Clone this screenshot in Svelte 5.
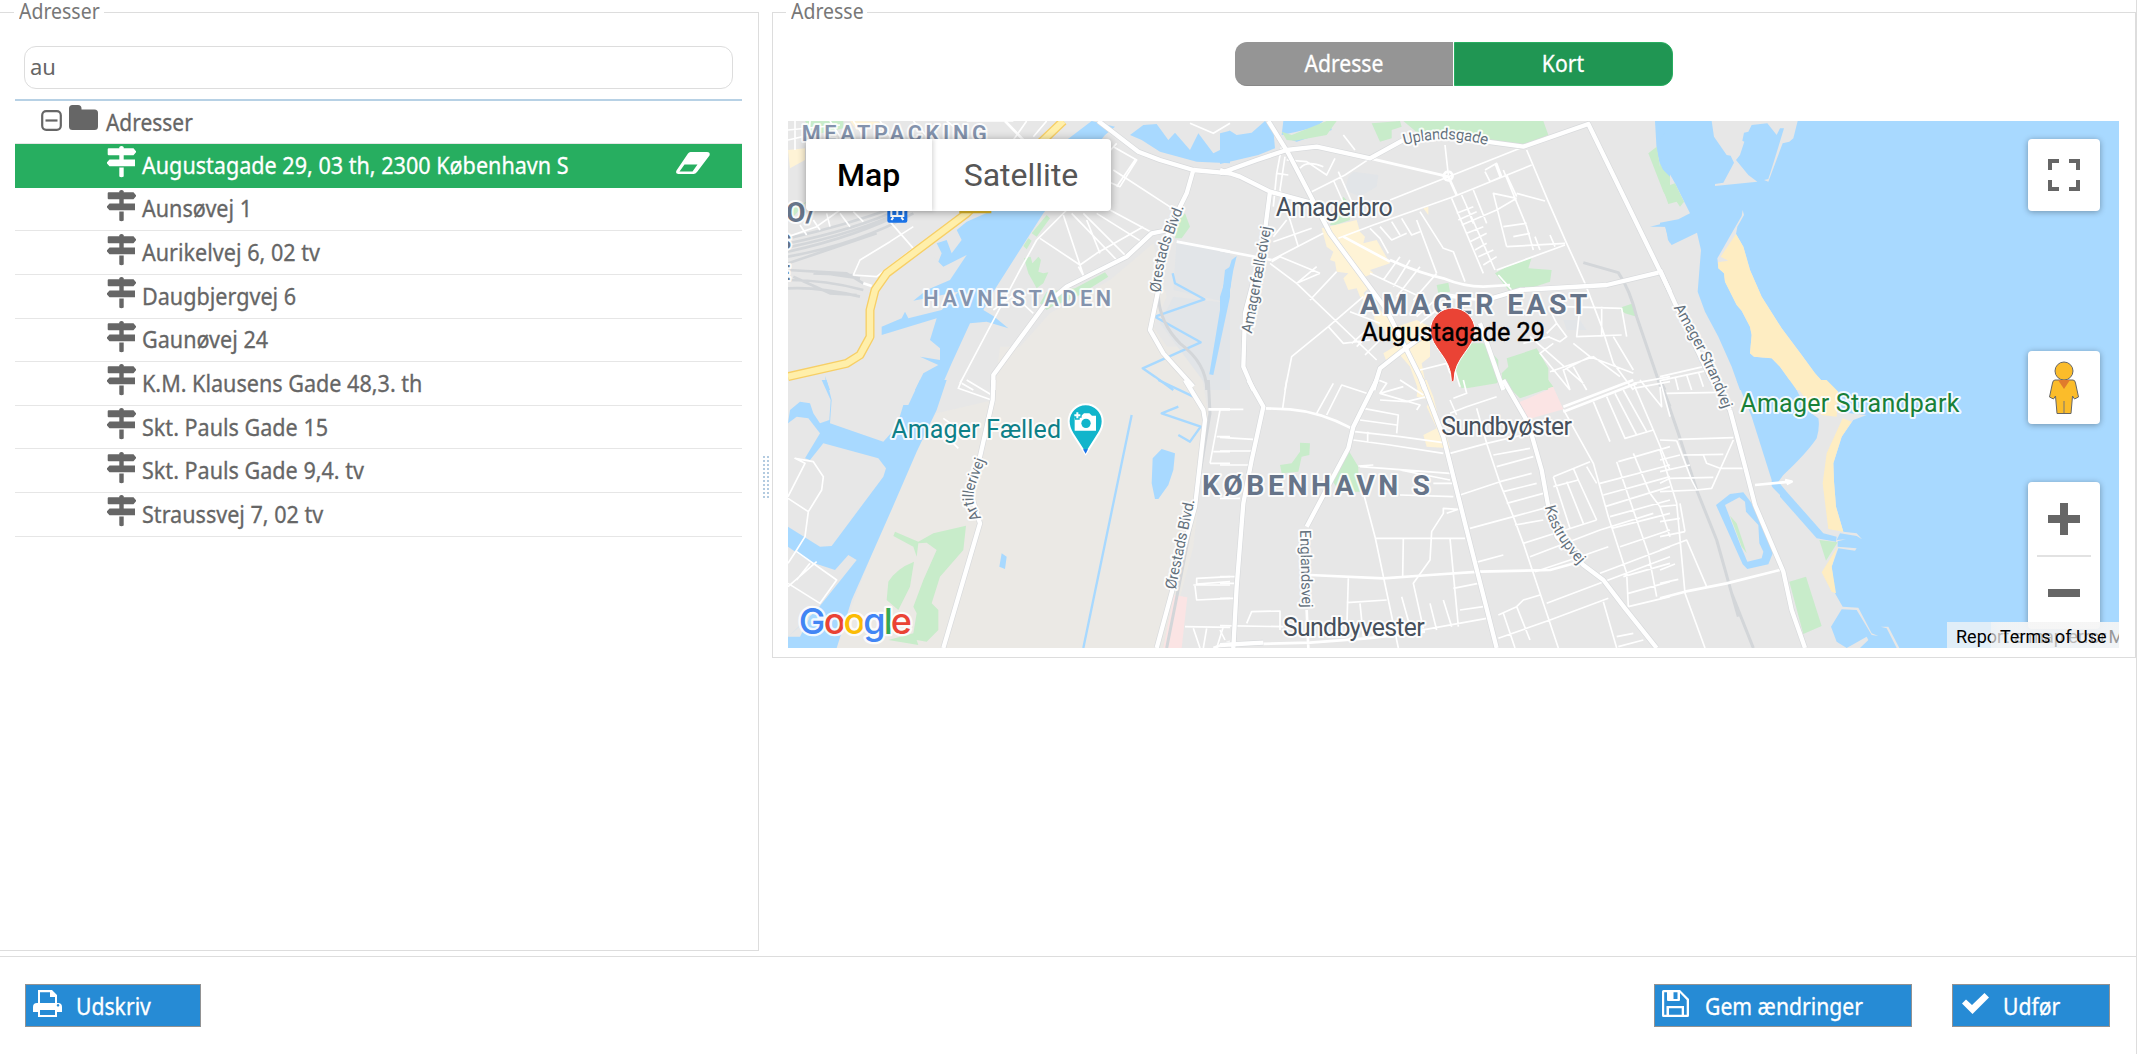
<script>
  const addresses = [
    'Augustagade 29, 03 th, 2300 København S',
    'Aunsøvej 1',
    'Aurikelvej 6, 02 tv',
    'Daugbjergvej 6',
    'Gaunøvej 24',
    'K.M. Klausens Gade 48,3. th',
    'Skt. Pauls Gade 15',
    'Skt. Pauls Gade 9,4. tv',
    'Straussvej 7, 02 tv'
  ];
  let query = $state('au');
  let selected = $state(0);

  // Map geometry, split in six tiles; each path is relative to its tile's origin.
  const tiles = [
    {
      x: 0, y: 0,
      beige: 'M640 840V800L810 610L990 510L1120 400L1160 560L1120 650L1230 810L1270 840Z',
      pale: 'M1190 390L1350 420V580L1180 540Z M1180 560L1350 580V840H1290L1140 640Z',
      water:
        'M935 33L1005 50L975 75L790 310L640 545L610 600L640 618L685 655L620 635L570 640L515 760L480 840H405L430 790L475 765L420 740L480 750V715L450 690L470 625L305 675V650L365 625L375 605L385 625L485 600L535 545L400 572L440 540L510 510L560 435L490 470L450 430L475 455L485 430L470 400L500 390L515 430L545 390L530 360L560 335L640 300L860 90Z M1050 75L1090 45L1130 42L1165 90L1185 68L1230 120L1255 70L1300 130L1320 120L1350 60V160L1250 155L1140 125L1085 90Z M1335 480L1350 470V560L1300 795L1288 793L1325 570Z M135 798L150 840H140Z',
      waterline: 'M1178 490L1185 520L1273 568L1125 620L1262 697L1088 775L1125 800L1180 840',
      park: 'M800 315L810 325L770 380L755 370Z M745 385L755 392L740 418L730 408Z M732 445L752 440L757 460L775 440L783 450L775 485L790 490L805 487L790 520L770 535L745 490Z M885 535L975 487L985 500L890 560L815 590L800 600L780 580L800 545Z M1195 330L1215 310L1230 350L1205 385H1185Z M75 33H190V55L100 75Z M25 300L80 275L40 320Z',
      yellow: 'M24 120L75 115V150L30 175Z M210 33L305 35L230 60Z',
      rail: 'M1135 560Q1140 640 1200 700Q1280 760 1280 840',
      yards: 'M24 400Q220 360 380 290 M24 412Q230 370 385 295 M24 425Q230 380 385 300 M24 440Q240 400 400 310 M24 385Q200 345 350 290 M24 460L290 370 M24 480L200 490L250 520 M24 510Q140 510 250 540 M24 535Q120 530 240 560 M100 485L240 505 M100 490L220 495 M40 500L150 550L230 555',
      minor:
        'M45 33V120 M90 33L85 100 M24 60L180 45 M24 90L110 70 M150 33L200 110 M220 33L260 90 M300 33L340 95 M400 33L450 90 M500 33L560 80 M560 33L700 33 M700 90L740 33 M800 33L760 80 M24 380L110 350L180 300 M60 345L80 375 M100 330L120 360 M140 310L150 350 M180 310L210 350 M220 305L250 335 M330 335L400 415L290 500L220 495L240 450L330 395L400 350 M440 405L520 350 M920 330L960 430 M860 300L770 390L720 480L540 820 M780 385L900 465L950 430L1020 390L1090 350 M850 315L910 495 M875 310L1010 450 M910 310L1040 440 M950 310L1085 395 M990 300L1120 370 M1000 180L1200 310 M985 215L1020 230L1070 150L1000 110 M1065 150L1010 230 M1230 40L1300 70L1350 40 M960 155L1010 100 M895 470L915 505 M760 610L700 555L640 600 M545 820L580 840',
      mid: 'M250 520L275 528 M675 33L740 100 M1190 395L1350 425',
      major: 'M955 33L1075 125L1140 150L1240 180L1350 190 M1240 180L1220 250L1200 290L1165 360L1115 370L1040 440L860 530L790 590L640 795V840 M1165 365L1135 540L1110 660L1150 730L1240 830',
      highway: 'M850 33L560 310L320 490L285 540L270 600L270 680L240 735L200 760L24 800'
    },
    {
      x: 0, y: 810,
      beige: 'M470 100L640 60L660 -100H1250L1285 100L1240 500L1160 804H170L230 640L330 380L420 170Z',
      pale: '',
      water:
        'M420 0H500L470 90L410 215L330 400L215 660L170 804H24V770L110 690L190 590L230 540L205 525L165 570L90 545L24 500V440L120 500L155 498L310 290L318 265L295 235L130 190L90 240L75 235L120 160L85 115L50 110L24 130L30 90L60 65L90 70L100 100L120 130L148 120L152 60L125 0H140L155 60L150 130L310 185L350 140L370 75L385 75Z M1118 235L1145 207L1185 220L1180 270L1165 315L1135 357H1125L1115 310Z M665 520L680 530L675 567L658 560Z M90 710L24 770H60Z',
      waterline: 'M1055 105L910 804 M1195 80L1145 100L1262 140L1230 185L1195 165 M1135 0L1240 50',
      park: 'M345 455L415 485L460 460L558 437L550 510L480 590L455 670L475 690V750L440 785L410 780L415 795L325 780L400 760L410 700L400 680L430 600L470 510L440 488L415 490L410 530L400 500L340 468Z M402 545L390 620L355 690L320 660L325 605Q350 565 402 545Z',
      yellow: '', pink: 'M1182 645L1222 652L1205 804H1150Z',
      rail: 'M1285 0L1290 100L1240 400L1160 804',
      yards: '',
      minor:
        'M545 0L535 25L635 60 M560 0L635 45 M490 115L540 150L510 180L535 205 M24 350L75 250L45 235L100 245L130 290L125 330L85 395L24 355 M85 395L75 470L50 510L24 550 M50 515L170 600L120 670L24 610 M90 550L50 600 M24 620L110 545 M1320 90L1290 250 M1310 170H1350 M1300 215H1350 M1290 250H1350 M1350 590L1250 595V612L1350 605 M1240 615H1350 M1245 618L1250 660L1350 655 M1215 740L1350 742 M1240 745L1260 804 M1280 745L1270 804 M1330 740L1310 804',
      mid: 'M1285 88H1350 M1350 785L1300 804',
      major: 'M640 0L638 60L600 230L570 330L600 430L490 804 M1215 0L1270 90L1275 120L1245 380L1130 804',
      highway: ''
    },
    {
      x: 1320, y: 0,
      beige: '', pale: 'M385 200L400 185L475 195L470 230L420 260L375 240Z M0 430L50 440L20 560L0 640Z M1030 630H1080L1100 660H1040Z',
      water: 'M0 70L30 62L50 75L95 68L135 33L160 60L165 115L115 135L0 162Z M190 33H310L290 50L230 65L185 75Z M0 560L35 450L50 438L40 480L20 600L0 680Z M330 33L335 60L230 95L200 85L320 40Z M1305 33H1350V260L1330 210L1310 120Z M1290 350L1350 335V400L1335 350Z M1130 40L1180 36Z',
      waterline: 'M0 665L30 520',
      park: 'M200 90L185 65L215 75L320 33H350L320 75L225 92Z M550 33H970L985 75L915 105L880 110L790 85L690 60L600 75Z M455 40L540 33L545 50L515 60V85L480 95Z M825 490L860 470L935 443L925 475L995 480L990 515L900 545H870Z M330 345L370 260L385 275L390 330L345 345Z M790 700L835 750V810L725 835L700 780L740 700Z M860 745L950 715L985 775V840H850L845 790L865 770Z M1195 595L1240 580L1250 620L1215 610Z M1285 130L1310 110L1320 170L1350 200V280L1330 245Z M650 525L685 518L690 545L655 550Z',
      yellow: 'M305 355L410 330L420 365L435 380L430 400L470 390L510 460L450 480L460 490L435 500L450 530L430 550L480 600L530 650L590 630L630 650V740L605 760L620 840H595L570 770L540 735L500 755L490 730L540 700L500 690L495 660L465 640L460 600L420 560L410 535L385 540L370 505L385 490L350 485L345 455L330 450L340 425L320 410Z M610 295L625 290V315Z',
      pink: 'M985 835L1000 830V840H985Z',
      rail: 'M1090 458L1195 488Q1230 540 1250 620L1325 840', yards: '',
      minor:
        'M275 245L375 195L450 145 M340 210L380 300 M355 185L410 310 M370 75L405 120 M200 150L260 155L320 195L345 145 M240 175Q260 150 310 170 M170 190L205 195 M195 140L180 240L210 330L235 410 M185 110L170 190L160 290 M200 330L160 380 M160 395L275 355 M155 450L310 370 M155 455L180 440L300 490 M300 490L230 520 M150 460L230 520L470 750 M230 520L290 470 M350 485L270 570 M430 560L325 650L215 740L195 840 M325 650L370 700L450 690 M390 605L480 640 M395 700L440 660 M410 710L450 670 M435 735L480 690 M450 355L480 385L505 430 M355 385L460 345L700 260L935 165 M480 350L515 390L560 370 M515 335L540 375 M545 325L575 375L600 365 M510 270L900 115 M675 105L685 195 M590 330L650 490 M600 305L670 415L700 425L735 515 M695 265L790 490 M725 255L825 480 M760 240L800 340 M850 180L920 350L940 420 M795 180L830 160L845 200L810 215L795 185 M825 160L840 200 M710 310L760 290 M715 330L770 305 M725 345L830 300L890 265 M740 370L790 350 M750 395L800 370 M765 420L800 400 M775 440L820 420 M790 465L830 440 M740 290L760 340 M890 265L820 250L860 410 M890 250L975 273 M860 410L1035 400 M880 380L930 370 M850 350L920 340 M990 375L1005 410 M945 380L960 420 M920 120L985 275L1040 400L1095 520 M830 480L1035 405 M860 195L890 260 M835 495L875 540 M570 450L520 530 M600 470L530 560 M450 490L600 560 M540 440L490 510 M650 490L580 570 M660 550L740 560 M590 620L640 575 M600 640L650 600 M600 780L680 760L690 790 M680 700L720 830 M1095 520L1145 650L1180 760L1240 840 M1030 590L1205 595L1220 680 M1080 590L1070 680L1205 675 M1010 640L1040 680L1020 695L985 680 M990 600L1010 640L980 670 M1145 590L1145 680 M990 785L1120 740L1200 800 M1060 700L1110 740L1240 790 M930 680L1090 820 M910 700L990 680 M1000 700L960 730L1050 840 M1180 680L1240 780 M1110 740L1030 780L1050 840 M1240 820L1350 800 M1240 835L1350 815 M1060 770L1100 840',
      mid: 'M0 420L155 450 M450 145L685 200L710 255 M510 450Q600 490 670 505Q730 530 790 530L870 525 M370 380L510 455 M685 185A13 13 0 1 1 684 185 M690 560L780 570L830 560',
      major: 'M145 33L205 130L330 370L500 600L600 800L615 840 M0 190L110 150L200 120L290 110L450 145L550 90 M800 95L910 110L1105 42L1350 545 M0 180L60 200L150 245L280 280 M150 245L130 400L75 610L70 770L100 840 M780 575L900 540L1160 525L1315 488 M550 720L620 670L660 640 M550 720L480 775L460 840 M780 640L850 840',
      highway: ''
    },
    {
      x: 1320, y: 810,
      beige: '', pale: '', water: '', waterline: '',
      park: 'M725 0H840L830 10L740 25Z M855 0H985L1000 20L900 55L880 35Z M240 188L270 190L268 225L245 230L235 275L185 280L180 255L215 250L240 215Z M388 215L415 260V285L425 335H360L335 300Z',
      yellow: 'M595 0H620L640 50L655 110L680 170L690 205L620 200L610 165L650 145L620 80L630 60L590 50Z', pink: 'M890 70L1000 22L1030 88L925 118H910Z',
      rail: 'M1318 0L1350 80', yards: '',
      minor:
        'M0 88H70 M200 0L188 85 M340 10L290 100 M320 105L365 15L440 40 M0 172L100 178 M0 213H95 M0 255H85 M0 355H60 M430 85L535 105L530 160 M420 120L530 135 M405 155L540 170L670 188 M400 180L510 195L670 220 M443 155V185 M475 0L500 10L480 40L550 20 M480 40L600 75L590 90 M480 60L560 65L620 50 M540 0L610 45 M420 260L690 280 M415 258L460 255 M540 270L690 300 M640 310H700 M420 300L465 470L505 660L535 804 M540 345L700 350 M465 475H735 M550 475L548 590 M715 388L670 385V400L635 455L630 540L580 610L610 745 M715 388L680 400 M0 590H50 M0 610H50 M0 655H45 M385 595L380 760 M380 668L500 660 M420 670L430 770 M545 650L570 740 M630 670L650 750 M670 660L695 740 M690 475L715 740 M700 625L775 610 M720 690L790 680 M580 755L800 715 M765 548L850 525 M750 445L880 410L990 380 M720 345L840 305L935 280 M690 220L800 190L930 160 M770 85L800 190L840 310L880 410L910 490L960 640L1015 804 M820 225L930 205 M830 260L940 230 M850 335L950 310 M860 370L970 340 M885 435L970 420 M910 490L1130 420 M930 530L1140 450L1300 400 M945 575L1080 530L1165 500 M980 670L1165 600L1350 530 M835 775L990 720L1165 655 M835 705L890 680L910 660L960 645 M850 700L885 804 M890 680L930 780 M1150 665L1190 804 M1190 770L1240 760 M1195 800L1270 780 M1030 88L1120 250L1165 410L1220 580L1225 680 M1000 290L1110 245 M1000 290L1050 445 M1040 305L1090 430 M1075 300L1130 420 M1060 265L1075 300L1000 320 M1100 260L1130 310 M1120 65L1170 185 M1160 50L1215 175L1300 150 M1185 40L1250 165 M1210 30L1280 155 M1240 10L1300 150L1350 270 M1260 0L1325 80L1320 20 M1195 245L1350 200 M1190 245L1250 420L1285 520L1310 650 M1240 220L1290 340L1320 380L1350 470 M1140 310L1350 255 M1150 345L1350 290 M1155 380L1350 320 M1170 410L1350 360 M1175 445L1350 400 M1200 500L1350 450 M1140 580L1350 500 M1210 590L1350 550 M1225 640L1350 605 M1225 680L1350 650 M80 730L95 695L180 693V750 M0 737L190 740 M0 750L15 780 M690 100L740 80L830 50 M700 55L740 40L730 0 M690 60L710 105',
      mid: 'M135 85L210 88Q300 95 395 145 M270 585L490 595L630 585L780 575L990 570L1080 545 M1030 95L1250 10 M1030 80L1240 0 M260 690L265 804 M0 795L270 788L440 775L615 755',
      major: 'M85 0L130 80L95 240L70 370L50 620L40 804 M470 0L400 140L385 205L260 440 M605 0L670 170L740 450L830 804 M850 0L925 130L965 270L985 380L1010 470L1090 555L1150 600L1215 685L1310 804 M0 795L130 788',
      highway: ''
    },
    {
      x: 2640, y: 0,
      beige: '', pale: '',
      water: 'M0 33H155L162 80L200 135L212 137L222 158L190 218L165 222V228L292 215L265 195L228 150L240 135L253 95L247 92L252 68L265 65L275 45L322 40L350 75L360 55H372L340 160L325 207L312 210L325 215L368 100L388 95L400 85L413 33H1377V840H510L465 790L425 735L365 655L305 560L270 480L250 410L228 372L232 350L252 315L248 300L245 318L215 370L172 445L175 475L192 490L195 515L230 585L245 602L270 650L275 675L270 730L282 740L335 745L360 770L410 840H240L215 770L175 680L135 605L113 545L123 420L111 368L35 405L24 390L17 350L0 348V338L55 328L90 310L45 220L0 140V85L15 70L0 50Z',
      waterline: '', park: 'M0 160L30 225L45 220L72 275L60 290L50 275L25 282L10 240L18 230L0 200Z',
      yellow2: 'M228 372L250 410L270 480L305 560L365 655L425 735L465 790L510 840H410L360 770L335 745L282 740L270 730L275 675L270 650L245 602L230 585L195 515L192 490L175 475L174 457L205 452L182 440Z',
      yellow: '', rail: 'M0 810L15 840', yards: '',
      minor: 'M0 800L130 770 M0 812L140 782 M45 800L55 840 M80 795L95 840 M115 785L130 830', mid: '',
      major: 'M0 480L45 580L150 800L210 900', highway: ''
    },
    {
      x: 2640, y: 810,
      beige: '', pale: '',
      water: 'M230 0H410L480 60L530 95L620 105L580 120L545 170L520 250L522 305L528 380L550 455L590 460L606 478L590 468L540 460L530 480L558 478L533 484V500L590 505L585 512L535 505L515 560L525 640L548 680L595 683L635 760L655 768L635 765L590 690L545 688L513 740L530 785L560 804L620 770L625 780L600 804H710L680 745L662 740L685 740L718 804H1377V0H500L520 30L440 20L395 0Z M230 0L275 110L335 300V318L340 325L360 345V350L470 475L528 485L530 470L490 460L380 335L355 305L370 285Q440 220 470 175Q480 140 475 115L440 90L395 0Z M168 375L210 342L250 337L275 370L340 515L325 553L262 567L248 553Z',
      land: 'M195 375L238 352L255 365L258 395L295 435L298 490L310 515L305 535L262 545L245 505Z',
      waterline: '', park: 'M210 407L230 430L260 520L245 500Z M478 480L533 487L498 542Z M388 605L438 590L485 738L430 762Z',
      yellow2: 'M395 0H500L535 35L530 110L485 105L440 60Z M548 115L575 125L545 170L520 250L522 305L528 380L550 455L505 447L488 310L500 220Z M533 500L515 560L528 640L515 635L485 577Z',
      yellow: '', rail: 'M0 0L55 160L110 330L170 480L215 640L280 804 M215 640L235 710', yards: '',
      minor: 'M0 180L50 182 M55 178L220 173 M70 225L190 223 M0 240L60 225 M50 182L95 300L110 330 M0 210L50 370L75 640L135 804 M0 335L110 330L155 325L220 180 M130 225L140 250L180 265H255 M20 40L180 37 M0 0L30 110 M0 275L90 255 M0 310L30 295L160 292 M0 380L50 375 M0 425L60 415 M0 470L75 455 M0 510L80 480L140 620 M0 570L45 552 M0 610L55 598 M75 455L60 370',
      mid: 'M0 655L75 635L200 610L360 570 M285 315L390 305 M375 300L395 305L380 312',
      major: 'M210 90L250 240L285 375L370 575L395 690L435 804', highway: ''
    }
  ];

  const layers = ['beige', 'pale', 'water', 'land', 'waterline', 'park', 'yellow2', 'yellow', 'pink', 'yards', 'rail', 'minor', 'mid', 'casing', 'major', 'hwcase', 'highway'];
  const source = { casing: 'major', hwcase: 'highway' };

  const places = [
    { t: 'MEATPACKING', x: 65, y: 93, w: 555, k: 'district' },
    { t: 'HAVNESTADEN', x: 430, y: 587, w: 563, k: 'district' },
    { t: 'Amager Fælled', x: 334, y: 985, w: 509, k: 'sight' },
    { t: 'KØBENHAVN S', x: 1266, y: 1155, w: 684, k: 'city' },
    { t: 'Amagerbro', x: 1487, y: 318, w: 351, k: 'town' },
    { t: 'AMAGER EAST', x: 1740, y: 612, w: 682, k: 'city' },
    { t: 'Sundbyøster', x: 1984, y: 975, w: 392, k: 'town' },
    { t: 'Sundbyvester', x: 1509, y: 1577, w: 425, k: 'town' },
    { t: 'Amager Strandpark', x: 2881, y: 907, w: 657, k: 'green' }
  ];
  const streets = [
    { t: 'Ørestads Blvd.', d: 'M1142 548Q1150 440 1182 370L1214 285', w: 268 },
    { t: 'Artillerivej', d: 'M604 1224L582 1180Q576 1150 592 1110L619 1040', w: 185 },
    { t: 'Ørestads Blvd.', d: 'M1186 1440L1245 1165', w: 275 },
    { t: 'Uplandsgade', d: 'M1873 105Q2000 70 2122 106', w: 251 },
    { t: 'Amagerfælledvej', d: 'M1415 672L1475 345', w: 326 },
    { t: 'Englandsvej', d: 'M1560 1260L1566 1495', w: 234 },
    { t: 'Kastrupvej', d: 'M2295 1190Q2310 1270 2400 1368', w: 205 },
    { t: 'Amager Strandvej', d: 'M2680 592Q2790 780 2830 902', w: 340 }
  ];
</script>

{#snippet signpost()}
  <svg class="sign" viewBox="0 0 29 32">
    <path d="M12.300 1Q14.500-1 16.700 1V2.300H26.500L29 5.200V6.300L26.500 9.200H16.700V13.500H28V20.300H2.500L0 17.500V16.300L2.500 13.500H12.300V9.200H1.700Q.7 9.200.7 8.200V3.300Q.7 2.300 1.700 2.300H12.300zM12.300 21.600h4.400V30.500q-2.200 1.600-4.400 0z" />
  </svg>
{/snippet}

<div class="app">
  <div class="workspace">
    <fieldset class="list">
      <legend><span>Adresser</span></legend>
      <input bind:value={query} aria-label="Søg" />
      <div class="tree">
        <div class="row root">
          <svg class="box" viewBox="0 0 21 21"><rect x="1.200" y="1.200" width="18.600" height="18.600" rx="4" /><path d="M4.500 10.500h12" /></svg>
          <svg class="folder" viewBox="0 0 29 25"><path d="M0 3.500Q0 0 3.500 0H9q3.500 0 3.500 3.500V4.500H25.500Q29 4.500 29 8v13.500q0 3.500-3.500 3.500h-22Q0 25 0 21.500z" /></svg>
          <span class="name">Adresser</span>
        </div>
        {#each addresses as a, i}
          <!-- svelte-ignore a11y_click_events_have_key_events, a11y_no_static_element_interactions -->
          <div class="row" class:selected={i === selected} onclick={() => (selected = i)}>
            {@render signpost()}
            <span class="name">{a}</span>
            {#if i === selected}
              <svg class="eraser" viewBox="0 0 34 22"><path fill-rule="evenodd" d="M14.500 0H31q3.500 0 2.500 3.500L21 20q-1.500 2-3.500 2H2.500q-3.500 0-2-3.500L12 1.500Q13 0 14.500 0zM8.500 12.500L3.500 19.500H16.500L21.500 12.500z" /></svg>
            {/if}
          </div>
        {/each}
      </div>
    </fieldset>
    <div class="splitter"><i></i></div>
    <fieldset class="detail">
      <legend><span>Adresse</span></legend>
      <div class="toggle">
        <button><span>Adresse</span></button>
        <button class="on"><span>Kort</span></button>
      </div>
      <div class="map">
        <svg class="canvas" viewBox="24 33 3993 1581" preserveAspectRatio="none">
          {#each layers as layer}
            {#each tiles as t}
              {#if t[source[layer] ?? layer]}
                <path class={layer} transform="translate({t.x} {t.y})" d={t[source[layer] ?? layer]} />
              {/if}
            {/each}
          {/each}
          <g class="station"><rect x="322" y="280" width="60" height="58" rx="6" /><path d="M334 296h36v22h-36zM352 296v22M340 322l-6 8M364 322l6 8" /></g>
          <path class="junction" d="M538 296h96v14h-96z" />
          {#each places as p}
            <text class={p.k} x={p.x} y={p.y} textLength={p.w}>{p.t}</text>
          {/each}
          <text class="city" x="18" y="335">O/</text>
          <text class="city small" x="-4" y="418">S</text>
          <text class="city small" x="-4" y="510">E</text>
          {#each streets as s, i}
            <path id="street{i}" class="guide" d={s.d} />
            <text class="street"><textPath href="#street{i}" textLength={s.w}>{s.t}</textPath></text>
          {/each}
          <g class="camera">
            <path class="drop" d="M917 1032L878 971Q866 953 866 934A51 51 0 0 1 968 934Q968 953 956 971Z" />
            <path class="tip" d="M909 1018h15l-7 13z" />
            <path class="body" d="M884 917h20l8-7h16l8 7h12v45h-64z" />
            <circle cx="918" cy="940" r="14" />
            <path class="plushalo" d="M892 903v26M879 916h26" />
            <path class="plus" d="M892 907v18M883 916h18" />
          </g>
          <path class="pin" d="M2018 594A67 67 0 0 1 2085 661C2085 715 2022 740 2022 812Q2018 818 2014 812C2014 740 1951 715 1951 661A67 67 0 0 1 2018 594Z" />
          <text class="marker" x="1744" y="692" textLength="551" lengthAdjust="spacingAndGlyphs">Augustagade 29</text>
          <text class="google" x="56" y="1571" textLength="340"><tspan class="b">G</tspan><tspan class="r">o</tspan><tspan class="y">o</tspan><tspan class="b">g</tspan><tspan class="g">l</tspan><tspan class="r">e</tspan></text>
        </svg>
        <div class="types"><button class="active">Map</button><button>Satellite</button></div>
        <button class="ctl full" aria-label="Fullscreen"><svg viewBox="0 0 32 32"><path d="M2 11V2h9M21 2h9v9M30 21v9h-9M11 30H2v-9" /></svg></button>
        <button class="ctl peg" aria-label="Street View">
          <svg viewBox="0 0 32 54">
            <path class="man" d="M7 19h18q2 0 2.500 3l3 14-4 2-2-3-1.500 17.500H9L7.500 35l-2 3-4-2 3-14Q5 19 7 19z" />
            <circle class="man" cx="16" cy="10" r="9" /><path class="neck" d="M10 19h12l-6 9z" /><path class="leg" d="M16 40v12" />
          </svg>
        </button>
        <div class="ctl zoom">
          <svg viewBox="0 0 32 32"><path d="M0 16h32M16 0v32" /></svg>
          <i></i>
          <svg viewBox="0 0 32 32"><path d="M0 16h32" /></svg>
        </div>
        <div class="legal"><span class="report">Report a map error</span><span class="terms">Terms of Use<em>M</em></span></div>
      </div>
    </fieldset>
  </div>
  <footer>
    <button class="act print">
      <svg viewBox="0 0 29 27"><path fill-rule="evenodd" d="M5 0h14l5 5v8h1q4 0 4 4v5h-5v5H5v-5H0v-5q0-4 4-4h1zM7 2.300V13h15V7h-5V2.300zM7 20v5h15v-5zM25 14a1.300 1.300 0 1 0 .1 0z" /></svg><span>Udskriv</span>
    </button>
    <button class="act save">
      <svg viewBox="0 0 27 27"><path fill-rule="evenodd" d="M1.500 0H18l9 9v16.500q0 1.500-1.500 1.500h-24Q0 27 0 25.500v-24Q0 0 1.500 0zM2.200 2.300v22.500H4.500V16h17.500v8.800h2.700V10L18 3v7q0 1-1.200 1H6Q5 11 5 10V2.300zM11.500 2.300V9H15.500V2.300zM7 18.200v6.600h12.700v-6.600z" /></svg><span>Gem ændringer</span>
    </button>
    <button class="act done">
      <svg viewBox="0 0 27 21"><path d="M0 10.500L4 6.500L10 12L22.500 0L27 4.500L10.500 21z" /></svg><span>Udfør</span>
    </button>
  </footer>
</div>

<style>
  :global(body) { background: #fff; overflow: hidden; }
  * { box-sizing: border-box; }
  button { border: 0; padding: 0; margin: 0; background: none; font: inherit; color: inherit; }
  .app { width: 2137px; height: 1054px; border-right: 1px solid #ddd; font-family: 'Noto Sans', sans-serif; font-size: 23px; color: #666; display: flex; flex-direction: column; }
  .workspace { height: 956px; display: flex; align-items: flex-start; }
  fieldset { border: 1px solid #ddd; margin: 0; padding: 0; min-width: 0; }
  legend { height: 25px; line-height: 21px; padding: 0 5px; color: #777; font-size: 22px; }
  legend span, .name, .toggle span, .act span { display: inline-block; white-space: nowrap; transform-origin: 0 50%; }
  .list { width: 759px; height: 951px; border-left: 0; }
  .list legend { margin-left: 14px; width: 90px; }
  .list legend span, .detail legend span { transform: scaleX(.885); }
  .list input { display: block; width: 709px; height: 43px; margin: 21px 0 0 24px; border: 1px solid #ddd; border-radius: 12px; padding: 0 5px 3px; font: 22px 'Noto Sans', sans-serif; color: #666; outline: 0; }
  .tree { width: 727px; margin: 10px 0 0 15px; border-top: 2px solid #b7d1e5; }
  .row { height: 43.630px; border-bottom: 1px solid #e6e6e6; padding-left: 92px; display: flex; align-items: center; }
  .root { padding-left: 26px; height: 43px; }
  .box { width: 21px; height: 21px; fill: none; stroke: #666; stroke-width: 2.200; margin-top: -4px; }
  .folder { width: 29px; height: 25px; fill: #666; margin: -9px 0 0 7px; }
  .name { transform: scaleX(.938); margin: -1px 0 0 6px; -webkit-text-stroke: .3px; }
  .root .name { margin-left: 8px; transform: scaleX(.91); }
  .sign { width: 29px; height: 32px; fill: #666; margin-top: -6px; }
  .selected { background: #27ae60; border-color: #27ae60; color: #fff; }
  .selected .sign, .eraser { fill: #fff; }
  .selected { position: relative; }
  .eraser { position: absolute; right: 32px; top: 8px; width: 34px; height: 22px; }
  .splitter { width: 13px; height: 951px; display: flex; align-items: center; justify-content: center; }
  .splitter i { width: 6px; height: 43px; margin-top: 3px; background: radial-gradient(circle at 1px 1px, #b3cbe0 1px, transparent 1.300px) 0 0 / 4px 4px; }
  .detail { width: 1364px; height: 658px; }
  .detail legend { margin-left: 13px; width: 81px; }
  .toggle { display: flex; gap: 1px; margin: 17px 0 35px 462px; width: 438px; height: 44px; color: #fff; }
  .toggle button { flex: 1; background: #959595; border-radius: 12px 0 0 12px; border-bottom: 1px solid #888; }
  .toggle .on { background: #209653; border: 1px solid #27ae60; border-radius: 0 12px 12px 0; }
  .toggle span { transform: scaleX(.92) translateY(-1px); transform-origin: 50%; -webkit-text-stroke: .3px; }
  .map { position: relative; width: 1331px; height: 527px; margin-left: 15px; overflow: hidden; background: #e7e7e7; font-family: Roboto, sans-serif; }
  .canvas { width: 1331px; height: 527px; display: block; }
  .beige { fill: #ebe9e5; } .pale { fill: #e2e5e8; } .water { fill: #a8d9ff; } .land { fill: #e7e7e7; }
  .park { fill: #c8ecca; } .yellow { fill: #fef3d6; } .yellow2 { fill: #feedc2; } .pink { fill: #fbe4e4; }
  .waterline, .yards, .rail, .minor, .mid, .casing, .major, .hwcase, .highway { fill: none; stroke-linejoin: round; stroke: #fff; }
  .waterline { stroke: #a8d9ff; stroke-width: 7; } .yards { stroke: #d3d6d9; stroke-width: 8; } .rail { stroke: #d3d6d9; stroke-width: 9; }
  .minor { stroke-width: 5; } .mid { stroke-width: 8; } .casing { stroke: #d8dadc; stroke-width: 17; } .major { stroke-width: 13; }
  .hwcase { stroke: #f7cf66; stroke-width: 27; } .highway { stroke: #ffefaa; stroke-width: 19; }
  .junction { fill: #dcb62b; }
  .station rect { fill: #1a73e8; } .station path { fill: none; stroke: #fff; stroke-width: 6; }
  .canvas text { font-size: 75px; paint-order: stroke; stroke: #fff; stroke-opacity: .85; stroke-width: 12; stroke-linejoin: round; }
  .canvas .district { fill: #8493ad; font-size: 65px; font-weight: 600; }
  .canvas .city { fill: #667489; font-size: 85px; font-weight: 700; }
  .canvas .small { font-size: 60px; }
  .town { fill: #47505c; } .sight { fill: #0d8088; } .green { fill: #188038; }
  .canvas .street { font-size: 46px; fill: #63707c; }
  .guide { fill: none; }
  .drop { fill: #12b5cb; stroke: #fff; stroke-width: 6; } .tip { fill: #1a73e8; } .body { fill: #fff; }
  .camera circle { fill: #12b5cb; } .plushalo { stroke: #12b5cb; stroke-width: 14; } .plus { stroke: #fff; stroke-width: 6; }
  .pin { fill: #ea4335; stroke: #fff; stroke-width: 3; }
  .canvas .marker { stroke: #000; stroke-width: 1.500; fill: #000; font-size: 76px; }
  .canvas .google { font: 500 108px Inter, sans-serif; stroke-width: 14; }
  .b { fill: #4285f4; } .r { fill: #ea4335; } .y { fill: #fbbc05; } .g { fill: #34a853; }
  .types { position: absolute; left: 18px; top: 18px; height: 72px; display: flex; font-size: 32px; color: #565656; background: #fff; border-radius: 4px; box-shadow: 0 1px 8px #0005; }
  .types button { width: 179px; padding-right: 1px; }
  .types .active { width: 126px; color: #000; font-weight: 500; box-shadow: 2px 0 4px #0002; }
  .ctl { position: absolute; right: 19px; width: 72px; background: #fff; border-radius: 4px; box-shadow: 0 1px 6px #0005; }
  .ctl svg { width: 32px; height: 32px; display: block; margin: 0 auto; fill: none; stroke: #666; stroke-width: 4; }
  .full { top: 18px; height: 72px; }
  .peg { top: 230px; height: 73px; }
  .ctl.peg svg { height: 54px; stroke-width: 1; }
  .man { fill: #fbbc2a; stroke: #666; } .neck { fill: #e07b2c; stroke: none; } .leg { stroke: #777; }
  .zoom { top: 361px; height: 147px; padding-top: 21px; }
  .ctl.zoom svg { stroke-width: 8; }
  .zoom i { display: block; width: 54px; height: 2px; margin: 20px auto; background: #e2e2e2; }
  .legal { position: absolute; right: 0; bottom: 0; width: 172px; height: 26px; line-height: 29px; font-size: 18px; color: #000; background: #f5f5f5b8; overflow: hidden; white-space: nowrap; }
  .report { position: absolute; left: 9px; }
  .terms { position: absolute; left: 44px; right: 0; height: 26px; padding-left: 9px; background: linear-gradient(90deg, #f5f5f599, #f5f5f5c0 10px); }
  .terms em { font-style: normal; color: #999; margin-left: 2px; }
  footer { height: 98px; border-top: 1px solid #ddd; display: flex; padding: 27px 26px 0 25px; }
  .act { height: 43px; background: #268bd5; border: 1px solid #929292; color: #fff; display: flex; align-items: center; }
  .act svg { fill: #fff; margin-top: -5px; }
  .print { width: 176px; padding-left: 7px; } .print svg { width: 29px; height: 27px; margin-right: 14px; }
  .save { width: 258px; margin-left: auto; padding-left: 7px; } .save svg { width: 27px; height: 27px; margin-right: 16px; }
  .done { width: 158px; margin-left: 40px; padding-left: 9px; } .done svg { width: 27px; height: 21px; margin-right: 14px; }
  .act span { transform: scaleX(.92); margin-top: 1px; -webkit-text-stroke: .3px; }
</style>
